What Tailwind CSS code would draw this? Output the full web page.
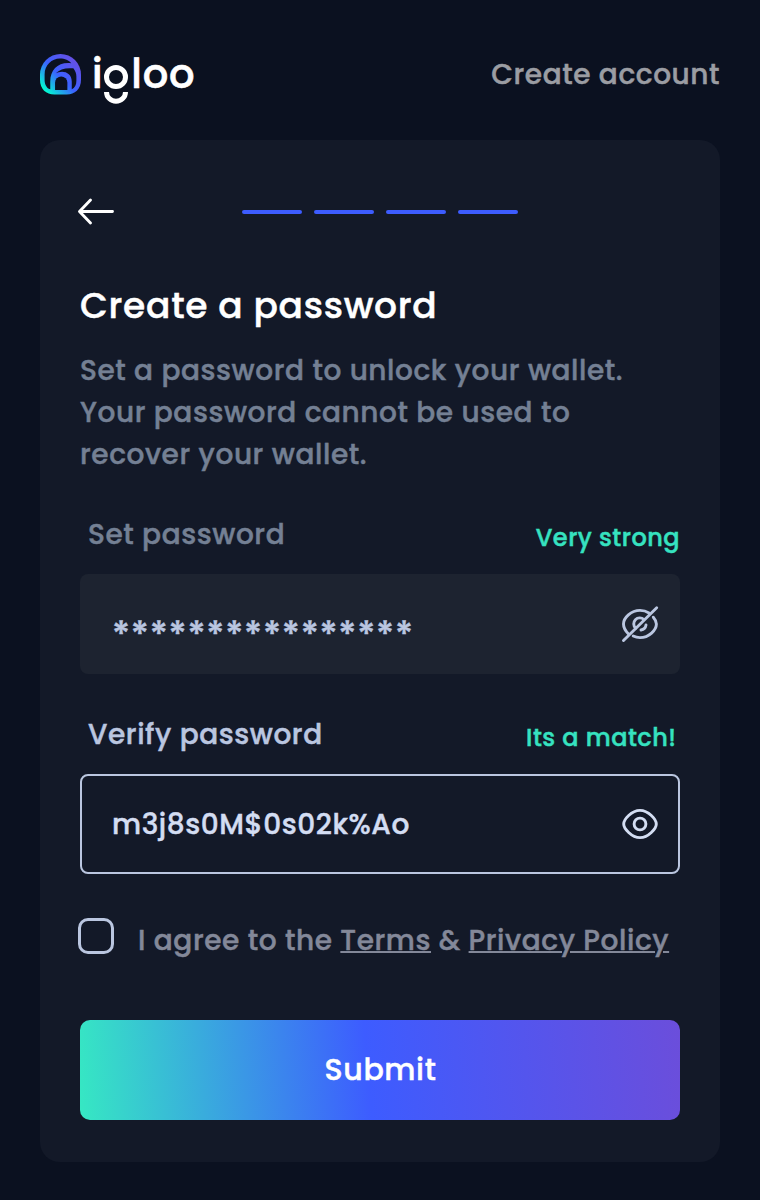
<!DOCTYPE html>
<html lang="en">
<head>
<meta charset="utf-8">
<title>igloo – Create account</title>
<script src="https://cdn.jsdelivr.net/npm/@tailwindcss/browser@4"></script>
</head>
<body class="bg-[#0b1120] font-['Poppins','Inter',sans-serif] text-[28px] leading-[42px] font-medium tracking-[0.02em] antialiased [-webkit-text-stroke:0.45px_currentColor]">
<div class="h-[1200px] w-[760px] overflow-hidden px-10">
  <header class="flex h-[140px] items-center justify-between pt-[8px]">
    <div class="flex items-center gap-[11px]">
      <svg class="size-[41px]" viewBox="0 0 40 40">
        <defs><linearGradient id="ice" x1="4" y1="36" x2="34" y2="7" gradientUnits="userSpaceOnUse"><stop stop-color="#00ffcf"/><stop offset=".5" stop-color="#3b62ff"/><stop offset="1" stop-color="#6450e6"/></linearGradient></defs>
        <path fill="url(#ice)" d="M20 0A20 20 0 0 1 40 20V25C40 34 34 39.500 26 39.500H14C6 39.500 0 34 0 25V20A20 20 0 0 1 20 0Z"/>
        <g fill="#0b1120">
          <path d="M10 34.500C6 33 4.500 29 4.500 25V20C4.500 11 11.500 4.500 19.500 4.500C24 4.500 28.500 6.500 30.500 9C18 7.500 10 15 10 27Z"/>
          <path d="M15.500 18.800C19 15 25 13.200 32.500 14C34.500 16.500 35.500 19 35.500 22V26C35.500 30 34 33 31 34.500V27C31 20.500 26.500 17.300 21.500 17.300C19 17.300 17 18 15.500 18.800Z"/>
          <path d="M14.700 35V28A6 6 0 0 1 26.700 28V35Z"/>
        </g>
      </svg>
      <span class="flex text-[40px] leading-[50px] tracking-[0.8px] text-white [-webkit-text-stroke:0.6px_currentColor]"><span>i</span><span class="relative text-transparent">g<svg class="absolute left-[0.500px] top-[16px] h-[42px] w-[24px]" viewBox="0 0 24 42" fill="none" stroke="#fff" stroke-width="5"><circle cx="12" cy="12" r="9.500"/><path d="M2.500 27A9.500 9.300 0 0 0 21.500 27"/></svg></span><span>loo</span></span>
    </div>
    <span class="mt-[2px] text-[#9b9da3]">Create account</span>
  </header>

  <main class="flex h-[1022px] flex-col rounded-[20px] bg-[#131928] px-10">
    <div class="relative flex h-[144px] items-center justify-center">
      <svg class="absolute left-[-3px] top-[56px] h-[30px] w-[38px]" viewBox="0 0 38 30" fill="none" stroke="#fff" stroke-width="2.900" stroke-linecap="round" stroke-linejoin="round"><path d="M13.500 4L2.500 15.500L13.500 27M3 15.500H35.500"/></svg>
      <div class="flex gap-3">
        <i class="h-1 w-[60px] rounded-full bg-[#3d5cff]"></i>
        <i class="h-1 w-[60px] rounded-full bg-[#3d5cff]"></i>
        <i class="h-1 w-[60px] rounded-full bg-[#3d5cff]"></i>
        <i class="h-1 w-[60px] rounded-full bg-[#3d5cff]"></i>
      </div>
    </div>
    <h1 class="h-[66px] whitespace-nowrap text-[36px] leading-[44px] tracking-[0.02em] text-white">Create a password</h1>
    <p class="h-[126px] whitespace-nowrap text-[#748094]">Set a password to unlock your wallet.<br>Your password cannot be used to<br>recover your wallet.</p>

    <div class="mt-[38px] flex h-[60px] items-start justify-between pl-2">
      <label class="text-[#748094]">Set password</label>
      <span class="mt-[3px] text-[24px] tracking-[0.02em] text-[#36e2c0]">Very strong</span>
    </div>
    <div class="flex h-[100px] items-center justify-between rounded-lg bg-[#1d2330] pl-8 pr-5">
      <span class="mt-[22px] text-[36px] tracking-[0.02em] text-[#bac6e0]">****************</span>
      <svg class="size-10" viewBox="0 0 40 40" fill="none" stroke="#bac6e0" stroke-width="2.900" stroke-linecap="round">
        <path d="M3.500 36.500L36.700 3.700"/>
        <path d="M8.500 30C5.500 27 3.500 23 3.500 20C3.500 14 11 6.400 20 6.400C23.500 6.400 26.500 7.400 29 9"/>
        <path d="M33.300 13.200C35.300 15.500 36.400 18 36.400 20C36.400 26 29 33.600 20 33.600C17.500 33.600 15.200 33 13.200 32"/>
        <path d="M15.600 24.200A6 6 0 0 1 23.900 15.500"/>
        <path d="M26 21A6 6 0 0 1 21 26"/>
      </svg>
    </div>

    <div class="mt-10 flex h-[60px] items-start justify-between pl-2 pr-[3.500px]">
      <label class="text-[#bac6e0]">Verify password</label>
      <span class="mt-[3px] text-[24px] tracking-[0.02em] text-[#36e2c0]">Its a match!</span>
    </div>
    <div class="flex h-[100px] items-center justify-between rounded-lg border-2 border-[#bac6e0] pl-[30px] pr-[18px] text-[#d3ddf2]">
      <span class="mt-[2px]">m3j8s0M$0s02k%Ao</span>
      <svg class="size-10" viewBox="0 0 40 40" fill="none" stroke="#d3ddf2" stroke-width="2.900">
        <path d="M3.700 20C3.700 15.500 11.500 6.400 20 6.400S36.300 15.500 36.300 20S28.500 33.600 20 33.600S3.700 24.500 3.700 20Z"/>
        <circle cx="20" cy="20" r="5.900"/>
      </svg>
    </div>
    <div class="flex h-[146px] items-start gap-6 pt-[44px]">
      <i class="-ml-[2px] size-9 shrink-0 rounded-[10px] border-3 border-[#bac6e0]"></i>
      <span class="mt-[2px] whitespace-nowrap text-[#838899]">I agree to the <u class="decoration-2">Terms</u> &amp; <u class="decoration-2">Privacy Policy</u></span>
    </div>
    <button class="h-[100px] rounded-[10px] bg-[linear-gradient(85deg,#36e8c3_0%,#3d5cff_48%,#6b4edb_100%)] pl-px text-[30px] tracking-[0.02em] text-white">Submit</button>
  </main>
</div>
</body>
</html>
